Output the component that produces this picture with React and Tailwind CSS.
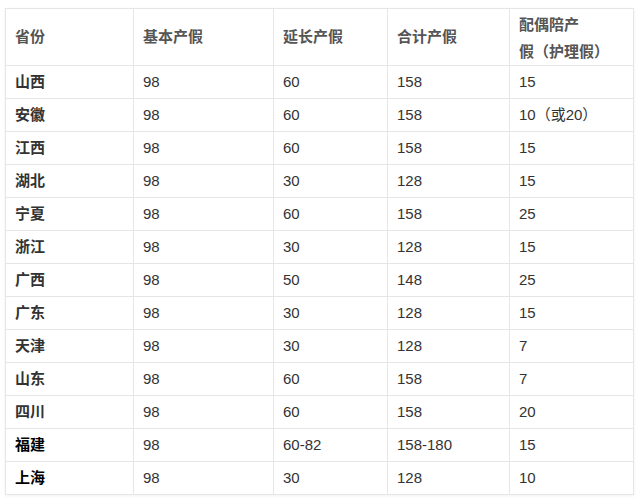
const rows = [
  ['山西', '98', '60', '158', '15'],
  ['安徽', '98', '60', '158', '10（或20）'],
  ['江西', '98', '60', '158', '15'],
  ['湖北', '98', '30', '128', '15'],
  ['宁夏', '98', '60', '158', '25'],
  ['浙江', '98', '30', '128', '15'],
  ['广西', '98', '50', '148', '25'],
  ['广东', '98', '30', '128', '15'],
  ['天津', '98', '30', '128', '7'],
  ['山东', '98', '60', '158', '7'],
  ['四川', '98', '60', '158', '20'],
  ['福建', '98', '60-82', '158-180', '15', true],
  ['上海', '98', '30', '128', '10', true],
];

const widths = ['w-[128px]', 'w-[140px]', 'w-[114px]', 'w-[122px]', 'w-[124px]'];

export default function App() {
  return (
    <div
      className="w-[640px] h-[502px] bg-white pl-[5px] pt-[8px]"
      style={{ fontFamily: '"Liberation Sans", "Noto Sans CJK SC", sans-serif' }}
    >
      <table className="border-collapse table-fixed w-[628px] text-[15px] text-[#333] shadow-[0_1px_3px_rgba(0,0,0,0.06)]">
        <thead>
          <tr className="h-[57px]">
            {['省份', '基本产假', '延长产假', '合计产假'].map((h, i) => (
              <th
                key={h}
                className={`${widths[i]} border border-[#e6e6e6] px-[9px] text-left font-semibold text-[#555] align-middle`}
              >
                {h}
              </th>
            ))}
            <th className="w-[124px] border border-[#e6e6e6] px-[9px] pt-[1px] text-left font-semibold text-[#555] leading-[27px] align-middle">
              配偶陪产
              <br />
              假（护理假）
            </th>
          </tr>
        </thead>
        <tbody>
          {rows.map((r) => (
            <tr key={r[0]} className="h-[33px]">
              <td
                className={`border border-[#e6e6e6] px-[9px] font-semibold ${
                  r[5] ? 'text-black font-bold' : 'text-[#333]'
                }`}
              >
                {r[0]}
              </td>
              {r.slice(1, 5).map((c, i) => (
                <td key={i} className="border border-[#e6e6e6] px-[9px] text-[#333]">
                  {c}
                </td>
              ))}
            </tr>
          ))}
        </tbody>
      </table>
    </div>
  );
}
